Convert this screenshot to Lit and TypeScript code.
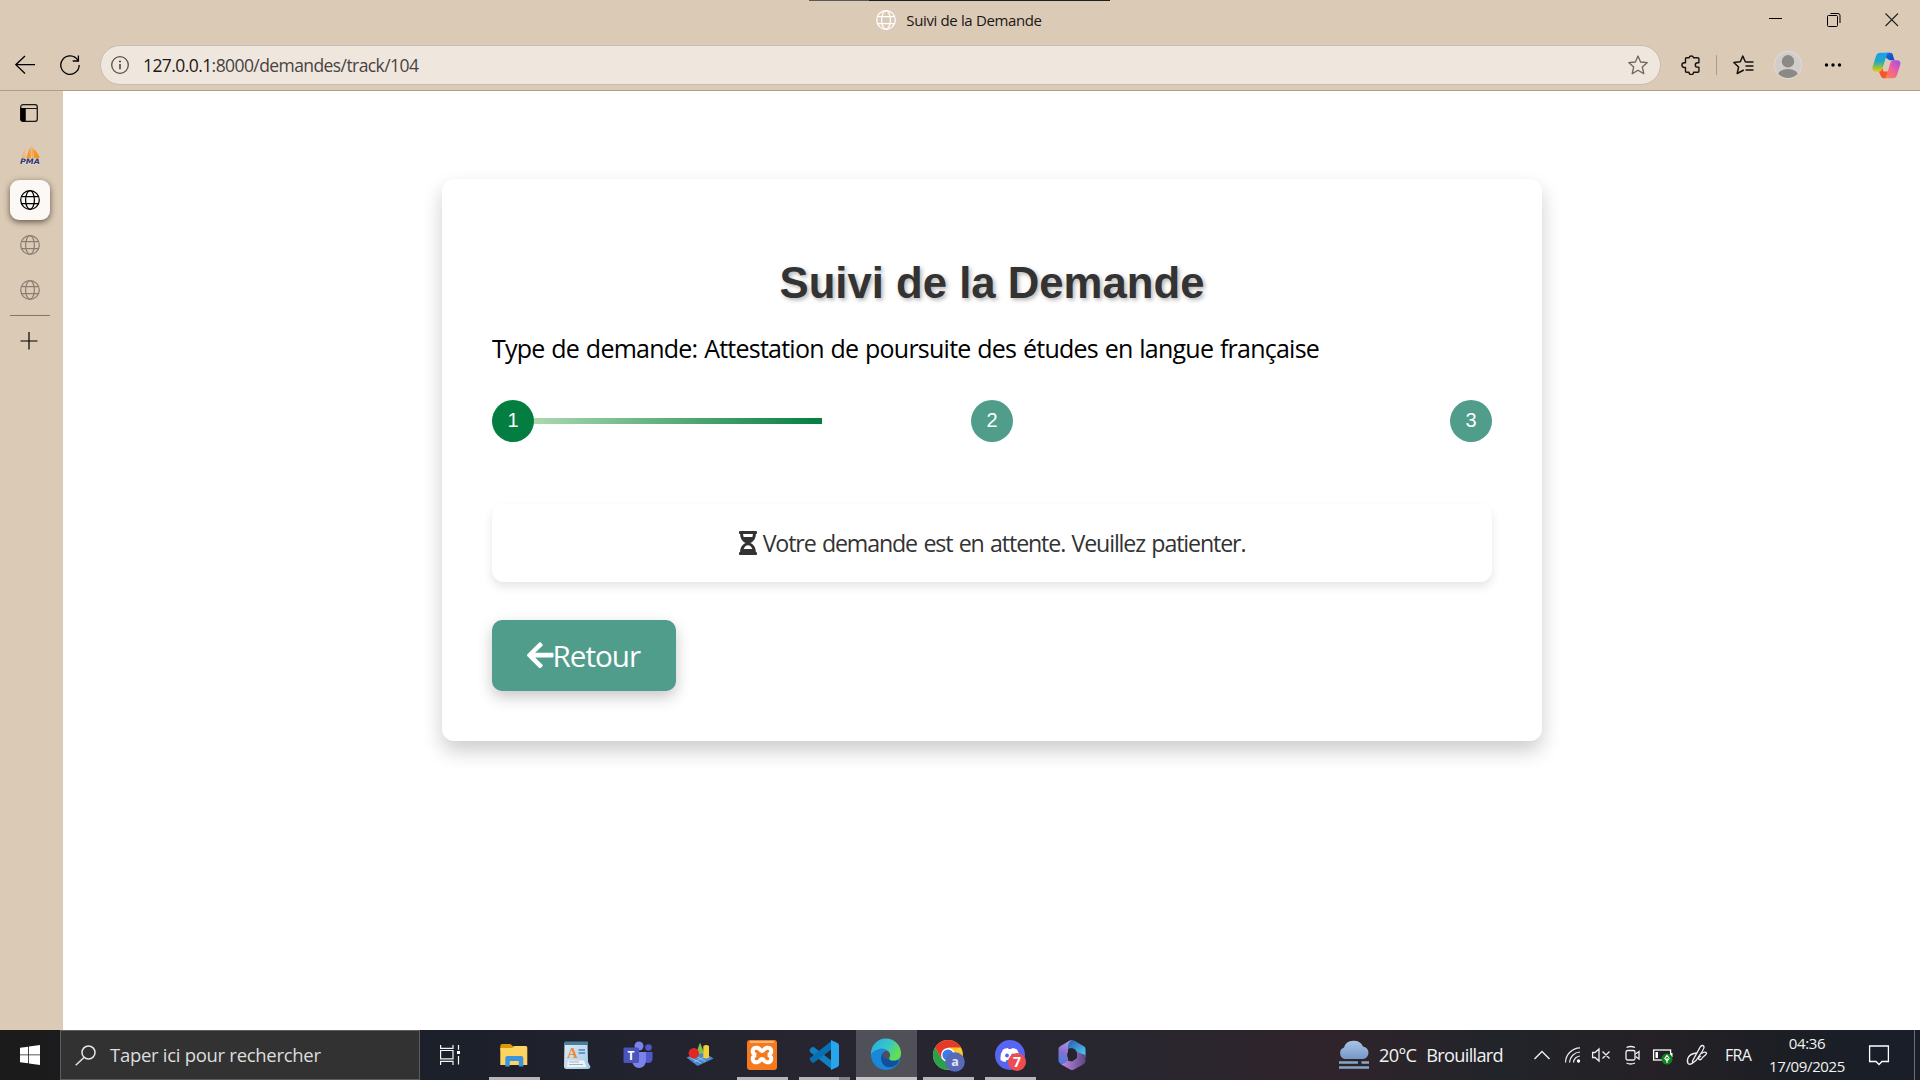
import { LitElement, html, css, svg } from "lit";
import { customElement } from "lit/decorators.js";

const globe = (size: number) => html`<svg class="ico" width=${size} height=${size} viewBox="0 0 20 20" fill="none" stroke="currentColor" stroke-width="1.25">
  <circle cx="10" cy="10" r="9.3"></circle><ellipse cx="10" cy="10" rx="4.4" ry="9.3"></ellipse><path d="M1.5 6.5H18.5M1.5 13.5H18.5"></path></svg>`;

@customElement("title-bar")
class TitleBar extends LitElement {
  static styles = css`
    :host { display: block; height: 40px; position: relative; }
    .bar { display: grid; grid-template-columns: 1fr auto 1fr; height: 40px; align-items: center; }
    .title { display: flex; align-items: center; gap: 10px; color: #fff; padding-right: 2px; }
    .text { color: #1a1714; font-size: 15px; line-height: 20px; letter-spacing: -0.36px; white-space: nowrap; }
    .ico { display: block; }
    .buttons { display: flex; justify-content: flex-end; gap: 44px; padding-right: 21px; }
    .strip { position: absolute; left: 809px; top: 0; width: 301px; height: 1px; background: linear-gradient(90deg, #5b5958 60px, #1e1e22 60px); }
  `;
  render() {
    return html`<div class="bar">
      <span></span>
      <div class="title">${globe(20)}<span class="text">Suivi de la Demande</span></div>
      <div class="buttons">
        <svg width="14" height="14" stroke="#000" fill="none"><path d="M0 5.5H13"></path></svg>
        <svg width="14" height="14" stroke="#000" fill="none"><path d="M.5 3.5a1 1 0 0 1 1-1H9.5a1 1 0 0 1 1 1V12.5a1 1 0 0 1-1 1H1.5a1 1 0 0 1-1-1ZM3.5 .5H11a2 2 0 0 1 2 2V10"></path></svg>
        <svg width="14" height="14" stroke="#222" fill="none" stroke-width="1.1"><path d="M.5 .5 13 13M13 .5 .5 13"></path></svg>
      </div>
    </div><div class="strip"></div>`;
  }
}

@customElement("tool-bar")
class ToolBar extends LitElement {
  static styles = css`
    :host { display: block; }
    .bar { display: flex; align-items: center; height: 51px; box-sizing: border-box; border-bottom: 1px solid #b09c8b; padding: 0 19px 0 15px; }
    svg { display: block; flex: none; }
    .back { margin-right: 25px; }
    .address { flex: 1; display: flex; align-items: center; height: 40px; box-sizing: border-box; border: 1px solid #c5bdb4; border-radius: 20px; background: #efe7de; margin: 0 20px 0 20px; padding: 0 12px 0 10px; gap: 14px; }
    .url { flex: 1; font-size: 17.5px; line-height: 24px; letter-spacing: -0.58px; color: #47433f; white-space: nowrap; padding-bottom: 1px; }
    .host { color: #1b1815; }
    .divider { width: 1px; height: 20px; background: #a99d8e; margin: 0 16px 0 16px; }
    .avatar { margin: 0 22px 0 20px; }
    .copilot { margin-left: 30px; }
  `;
  render() {
    return html`<div class="bar">
      <svg class="back" width="20" height="20" fill="none" stroke="#000" stroke-width="1.3"><path d="M10 1 .8 9.7 10 18.5M1 9.7H20"></path></svg>
      <svg width="20" height="20" fill="none" stroke="#000" stroke-width="1.3"><path d="M17.8 5.2A9.2 9.2 0 1 0 19.2 10M18.4 .5V6H12.7"></path></svg>
      <div class="address">
        <svg width="18" height="18" fill="none" stroke="#55504b" stroke-width="1.3"><circle cx="9" cy="9" r="8.3"></circle><path d="M9 8V13.2" stroke-width="1.7"></path><circle cx="9" cy="5.5" r="1.1" fill="#55504b" stroke="none"></circle></svg>
        <div class="url"><span class="host">127.0.0.1</span>:8000/demandes/track/104</div>
        <svg width="20" height="20" fill="none" stroke="#6b6661" stroke-width="1.3" stroke-linejoin="round"><path d="M10 1 12.6 7 19.3 7.6 14.3 12 15.8 18.7 10 15.2 4.2 18.7 5.7 12 .7 7.6 7.4 7Z"></path></svg>
      </div>
      <svg width="19" height="20" fill="none" stroke="#15120f" stroke-width="1.4" stroke-linejoin="round"><path d="M8 2.7a2.4 2.4 0 0 1 4.6 0H16.9Q17.9 2.7 17.9 3.7V7.7H16.5a2.2 2.2 0 0 0 0 4.4H17.9V16.3Q17.9 17.3 16.9 17.3H12.6a2.3 2.3 0 0 1-4.6 0H5.500Q4.500 17.300 4.500 16.300V12.500H3.300a2.400 2.400 0 0 1 0-4.800H4.500V3.700Q4.500 2.700 5.500 2.700Z"></path></svg>
      <div class="divider"></div>
      <svg width="21" height="20" fill="none" stroke="#15120f" stroke-width="1.5" stroke-linejoin="round"><path d="M14 7.1 12.3 6.8 9.8 1 7.3 6.8 .8 7.5 5.6 12 4.2 18.5 10.8 15M13.5 7H20.5M12.5 11H20.5M12.5 15H20.5"></path></svg>
      <svg class="avatar" width="28" height="28"><defs><clipPath id="av"><circle cx="14" cy="14" r="13"></circle></clipPath></defs><circle cx="14" cy="14" r="14" fill="#dedbd6"></circle><circle cx="14" cy="14" r="13" fill="#d0cdca"></circle><g clip-path="url(#av)" fill="#8c8885"><circle cx="14" cy="10.3" r="6.2"></circle><ellipse cx="14" cy="25" rx="10.5" ry="7"></ellipse></g></svg>
      <svg width="18" height="6" fill="#000"><circle cx="2.5" cy="3" r="1.7"></circle><circle cx="9" cy="3" r="1.7"></circle><circle cx="15.5" cy="3" r="1.7"></circle></svg>
      <svg class="copilot" width="29" height="27" viewBox="0 0 29 27">
        <defs>
          <linearGradient id="c1" x1="0" y1="0" x2="0" y2="1"><stop offset="0" stop-color="#1b9df0"></stop><stop offset=".45" stop-color="#22a9c0"></stop><stop offset=".75" stop-color="#8cc04a"></stop><stop offset="1" stop-color="#f5c518"></stop></linearGradient>
          <linearGradient id="c2" x1="1" y1="0" x2="0" y2="1"><stop offset="0" stop-color="#a048f0"></stop><stop offset=".5" stop-color="#f0609c"></stop><stop offset="1" stop-color="#ff8a3c"></stop></linearGradient>
          <linearGradient id="c3" x1="0" y1="0" x2="1" y2="1"><stop offset="0" stop-color="#0f75da"></stop><stop offset="1" stop-color="#143ec0"></stop></linearGradient>
        </defs>
        <path d="M14 .8H18.5Q20.2 .8 20.8 2.6L22 7Q22.3 8.2 24 8.2H17.5L13 5Z" fill="url(#c3)"></path>
        <path d="M8.2 .8H17Q15 1.5 14 5L10.5 16.5Q9.5 19.8 7 19.8H4Q-.5 19.8 .7 14.5L4 4Q5.2 .8 8.2 .8Z" fill="url(#c1)"></path>
        <path d="M7 19.8Q9.5 19.5 10.5 16.5L11.5 19.5H17.5L14.5 26.3H12Q9.5 26.3 8.8 24Z" fill="#f4552f"></path>
        <path d="M20.5 26.3H12.5Q14 25.5 15 22L18.5 10.5Q19.3 8.2 21.8 8.2H25Q29.3 8.2 28.1 13L25 23Q24 26.3 20.5 26.3Z" fill="url(#c2)"></path>
      </svg>
    </div>`;
  }
}

@customElement("side-tabs")
class SideTabs extends LitElement {
  static styles = css`
    :host { display: block; width: 63px; flex: none; }
    .tabs { display: flex; flex-direction: column; align-items: flex-start; padding-left: 10px; }
    .tab { display: flex; width: 40px; height: 40px; align-items: center; justify-content: center; margin-bottom: 5px; border-radius: 9px; color: #8b7f72; }
    .menu { margin: 2px 0 2px -1px; }
    .active { background: #fbf8f6; color: #000; box-shadow: 0 2px 6px rgba(60, 45, 30, .75); }
    .rule { width: 40px; height: 1px; background: #81766a; margin: 0 0 5px; }
    .last { margin: 0 0 0 -1px; color: #000; }
    svg { display: block; }
    .word { font: italic bold 7.5px "DejaVu Sans", sans-serif; }
  `;
  render() {
    return html`<div class="tabs">
      <div class="tab menu"><svg width="18" height="18" fill="none" stroke="#1b1713"><rect x=".7" y=".7" width="16.6" height="16.6" rx="2.3" stroke-width="1.3"></rect><path d="M1 4.5H17M5 4.5V17" stroke-width="1.2"></path><path d="M.5 4H5.5V17.5H2.5Q.5 17.5 .5 15.5Z" fill="#000" stroke="none"></path></svg></div>
      <div class="tab"><svg width="21" height="21"><path d="M1.2 13 4.8 3.5V13Z" fill="#efb67c"></path><path d="M6 13.5Q8.5 6 10.5 2L11 13.5Z" fill="#f79a2c"></path><path d="M11.5 .5L13.5 5 13 13.5 11.8 11Z" fill="#f6a850"></path><path d="M13.5 3.5Q18 8 20 12.5L13.8 13.5Z" fill="#f89423"></path><text class="word" x="0" y="18.8" fill="#34386d" stroke="#e5dcd6" stroke-width="1" paint-order="stroke" textLength="20" lengthAdjust="spacingAndGlyphs">PMA</text></svg></div>
      <div class="tab active">${globe(20)}</div>
      <div class="tab">${globe(20)}</div>
      <div class="tab">${globe(20)}</div>
      <div class="rule"></div>
      <div class="tab last"><svg width="18" height="18" stroke="#000" stroke-width="1.2"><path d="M9 0V17.5M.5 9H17.5"></path></svg></div>
    </div>`;
  }
}

@customElement("tracking-page")
class TrackingPage extends LitElement {
  static styles = css`
    :host { display: block; flex: 1; background: #fff; }
    .page { display: flex; justify-content: center; padding-top: 88px; padding-left: 1px; }
    .card { width: 1100px; height: 562px; box-sizing: border-box; padding: 76px 50px 0; border-radius: 12px; background: #fff; box-shadow: 0 10px 20px rgba(0, 0, 0, .2); }
    .heading { margin: 0; text-align: center; font: bold 43.7px/56px "Liberation Sans", Arial, sans-serif; color: #333; text-shadow: 2px 2px 4px rgba(0, 0, 0, .3); }
    .type { margin: 19px 0 0; font-size: 25px; line-height: 36px; letter-spacing: -0.76px; word-spacing: 1px; color: #000; white-space: nowrap; }
    .steps { display: flex; justify-content: space-between; align-items: center; height: 42px; margin-top: 34px; background: linear-gradient(90deg, #c3e6bd, #047e40) 0 18px / 330px 6px no-repeat; }
    .step { width: 42px; height: 42px; border-radius: 50%; background: #509d8b; color: #fff; font: 20px/40px "Liberation Sans", Arial, sans-serif; text-align: center; }
    .current { background: #047e40; }
    .message { display: flex; align-items: center; justify-content: center; gap: 6px; height: 78px; margin-top: 62px; border-radius: 12px; color: #333; box-shadow: 0 5px 10px rgba(0, 0, 0, .1); }
    .status { font-size: 23.2px; line-height: 34px; letter-spacing: -1.13px; word-spacing: 1.5px; white-space: nowrap; }
    .button { display: flex; align-items: center; width: 184px; height: 71px; box-sizing: border-box; margin-top: 38px; padding-left: 35px; border-radius: 10px; background: #509d8b; color: #fff; box-shadow: 0 6px 15px rgba(0, 0, 0, .22); }
    .label { font-size: 29.6px; line-height: 40px; letter-spacing: -1px; margin-left: -1px; }
    svg { display: block; flex: none; }
  `;
  render() {
    return html`<div class="page"><div class="card">
      <h1 class="heading">Suivi de la Demande</h1>
      <p class="type">Type de demande: Attestation de poursuite des études en langue française</p>
      <div class="steps">${[1, 2, 3].map((n) => html`<div class="step ${n === 1 ? "current" : ""}">${n}</div>`)}</div>
      <div class="message">
        <svg width="18" height="24" viewBox="0 0 384 512" fill="#333"><path d="M360 0H24C10.745 0 0 10.745 0 24v16c0 13.255 10.745 24 24 24 0 90.965 51.016 167.734 120.842 192C75.016 280.266 24 357.035 24 448c-13.255 0-24 10.745-24 24v16c0 13.255 10.745 24 24 24h336c13.255 0 24-10.745 24-24v-16c0-13.255-10.745-24-24-24 0-90.965-51.016-167.734-120.842-192C308.984 231.734 360 154.965 360 64c13.255 0 24-10.745 24-24V24c0-13.255-10.745-24-24-24zm-75.078 384H99.080c17.059-46.797 52.096-80 92.920-80 40.821 0 75.862 33.196 92.922 80zm.019-256H99.078C91.988 108.548 88 86.748 88 64h208c0 22.805-3.987 44.587-11.059 64z"></path></svg>
        <span class="status">Votre demande est en attente. Veuillez patienter.</span>
      </div>
      <div class="button">
        <svg width="26.6" height="30.4" viewBox="0 0 448 512" fill="#fff"><path d="M257.500 445.100l-22.200 22.200c-9.400 9.400-24.600 9.400-33.900 0L7 273c-9.400-9.400-9.400-24.600 0-33.900L201.400 44.700c9.400-9.400 24.600-9.400 33.900 0l22.200 22.200c9.500 9.500 9.300 25-.4 34.300L136.600 216H424c13.300 0 24 10.700 24 24v32c0 13.300-10.700 24-24 24H136.600l120.500 114.800c9.800 9.300 10 24.800.4 34.300z"></path></svg>
        <span class="label">Retour</span>
      </div>
    </div></div>`;
  }
}

const apps: { state: string; icon: unknown }[] = [
  { state: "open", icon: svg`<g transform="translate(-.7 0)"><path d="M2 6Q2 4 4 4H12L15 6.5H26Q28 6.5 28 8.5V11H2Z" fill="#d99a08"></path><path d="M2 8H14L16 6H27.5Q29 6 29 7.5V25H2Z" fill="#fdd45f"></path><path d="M7 26V18Q7 16 9 16H23Q25 16 25 18V26.5H20.5V21H11.5V26.5H7Z" fill="#3a95de"></path></g>` },
  { state: "", icon: svg`<defs><linearGradient id="n1" x1="0" y1="0" x2="1" y2="1"><stop offset="0" stop-color="#dcecf6"></stop><stop offset="1" stop-color="#a3cbe6"></stop></linearGradient></defs><path d="M3.5 3H26.5L27 22 29.5 27Q29 29.3 26 29H6Q2.8 29.3 3 26Z" fill="url(#n1)"></path><path d="M3.5 1.5H27V5H3.5Z" fill="#4b7d9c"></path><path d="M7 20.5H23L25.5 27H6Z" fill="#f1f4f6"></path><path d="M17.5 10H24M17.5 13H24" stroke="#4e83c4" stroke-width="1.5"></path><path d="M8 22H18M8 24.5H22" stroke="#9db4c6"></path><text class="serif" x="6" y="18" fill="#ee8b38">A</text>` },
  { state: "", icon: svg`<circle cx="16" cy="6" r="4.5" fill="#7b83eb"></circle><circle cx="25.5" cy="7.5" r="3.3" fill="#5059c9"></circle><path d="M19 12H29.5V19Q29 23 25 23Q22 23 20 21Z" fill="#5059c9"></path><path d="M9 12H23V21Q22 28 16 28Q10 27.5 9 21Z" fill="#7b83eb"></path><rect x=".5" y="7.5" width="15.5" height="15.5" rx="1.5" fill="#4b53bc"></rect><text class="tee" x="4.5" y="19.5" fill="#fff">T</text>` },
  { state: "", icon: svg`<path d="M1.5 17.5 17 11 28.5 18.5 12.5 26Z" fill="#4b87cc"></path><path d="M5 17.5 16 23M10 15.5 20.5 21.5M23 15 9 22" stroke="#93c1ee" fill="none"></path><path d="M11.5 12.5 15 2.5 19 12.5Q16 15 11.5 12.5Z" fill="#82c04c"></path><path d="M18.3 6Q21 4 24 6V17.5Q21 19.5 18.3 17.5Z" fill="#f4cf3c"></path><circle cx="8.8" cy="13.3" r="5.2" fill="#e02724"></circle>` },
  { state: "open", icon: svg`<rect width="30" height="30" rx="3" fill="#f47a20"></rect><path d="M3 2H27" stroke="#ffc998" stroke-width="1.5"></path><path d="M10 7.700C5 7 4 14 9 15C4 16 5 23 10 22.300C14 21.500 12.500 19 15 19S16 21.500 20 22.300C25 23 26 16 21 15C26 14 25 7 20 7.700C16 8.500 17.500 11 15 11S14 8.500 10 7.700Z" fill="none" stroke="#fff" stroke-width="4"></path>` },
  { state: "open stacked", icon: svg`<path d="M1 9 3 7.2Q4 6.5 5 7.2L23 21V29.5L1 12Q0 10.5 1 9Z" fill="#127fc0"></path><path d="M1 20 3 22.5Q4 23 5 22.5L23 9V.5L1 18Q0 19 1 20Z" fill="#0870b2"></path><path d="M22 0 28.5 3Q30 3.8 30 5.2V24.8Q30 26 28.5 27L22 30Z" fill="#27a5ed"></path>` },
  { state: "open active", icon: svg`<defs><linearGradient id="e1" x1="0" y1="0" x2="1" y2=".5"><stop offset="0" stop-color="#28a9e5"></stop><stop offset=".55" stop-color="#36c5cc"></stop><stop offset="1" stop-color="#66df4c"></stop></linearGradient></defs><circle cx="15" cy="15" r="15" fill="#1b87d8"></circle><path d="M10 18C11 12 14 11.5 16 12C13 16 17 23 27 20Q28.5 20 27.5 22C22 31 10 28 10 18Z" fill="#11509e"></path><path d="M18.5 17A3.8 3.8 0 1 0 16 18.5Q19 23 30 19L30 17Q27 21.5 22 21Q17 20.5 18.5 17Z" fill="#505058"></path><path d="M0 14A15 15 0 0 1 30 13C30 19 26 20.5 22 20.5C18.5 20.5 17.8 19 18.8 17C21 12 14 7 8 9Q3 10 0 14Z" fill="url(#e1)"></path>` },
  { state: "open", icon: svg`<circle cx="15" cy="15" r="15" fill="#fbc92e"></circle><path d="M2 7.5A15 15 0 0 1 28 7.5H15L8.5 18.8Z" fill="#e5392c"></path><path d="M2 7.5A15 15 0 0 0 15 30L21.5 18.7H8.5Z" fill="#2aa14c"></path><circle cx="15" cy="15" r="7" fill="#fff"></circle><circle cx="15" cy="15" r="5.6" fill="#3d7ce8"></circle><circle cx="22" cy="22" r="9.8" fill="#5769b7"></circle><text class="badge small" x="22" y="26" text-anchor="middle" fill="#e2e5f8">a</text>` },
  { state: "open", icon: svg`<circle cx="15" cy="15" r="15" fill="#5865f2"></circle><path d="M8 9.5Q10 8 13 8L13.5 9H16.5L17 8Q20 8 22 9.5Q25 14 24.5 20Q22 22 19.5 22L18.5 20H11.5L10.5 22Q8 22 5.5 20Q5 14 8 9.5Z" fill="#fff"></path><circle cx="12" cy="15.5" r="1.9" fill="#5865f2"></circle><circle cx="18" cy="15.5" r="1.9" fill="#5865f2"></circle><circle cx="22" cy="22" r="9" fill="#ed4d50"></circle><text class="badge" x="22" y="27" text-anchor="middle" fill="#fff">7</text>` },
  { state: "", icon: svg`<defs><linearGradient id="m1" x1=".5" y1="0" x2=".3" y2="1"><stop offset="0" stop-color="#a79be0"></stop><stop offset=".5" stop-color="#8a6fd0"></stop><stop offset="1" stop-color="#3f7fe0"></stop></linearGradient><linearGradient id="m2" x1="0" y1="0" x2="1" y2="1"><stop offset="0" stop-color="#2a56a8"></stop><stop offset="1" stop-color="#4fd2f8"></stop></linearGradient><linearGradient id="m3" x1="0" y1="0" x2="1" y2="0"><stop offset="0" stop-color="#c58be6"></stop><stop offset="1" stop-color="#5c4784"></stop></linearGradient></defs><path d="M13 .6Q15 -.5 17 .6L26.5 6Q28.5 7 28.5 9V17L20 13Q19 8 13 8L10 10Q8 2.5 13 .6Z" fill="url(#m2)"></path><path d="M15 0Q11 2 11 7V20Q10 24 6 25L3.5 23.8Q1.5 22.5 1.5 20.5V9Q1.5 7 3.5 6L13 .6Z" fill="url(#m1)"></path><path d="M28.5 15V21Q28.5 23 26.5 24.2L17 29.5Q15 30.5 13 29.5L3.5 24Q7 25 10.5 20.5L15 21.5 20 18V12Z" fill="url(#m3)"></path><circle cx="15" cy="15" r="4.9" fill="#25242e"></circle>` },
];

@customElement("task-bar")
class TaskBar extends LitElement {
  static styles = css`
    :host { display: block; height: 50px; }
    .bar { display: flex; height: 50px; color: #f2f2f2; background: linear-gradient(90deg, #1b1b1b 0, #1c202b 450px, #262530 800px, #28262f 1120px, #30242b 1330px, #212429 1500px, #252126 1650px, #1b1e24 1800px, #191e29 1900px); }
    .start { width: 60px; display: flex; align-items: center; justify-content: center; }
    .search { display: flex; align-items: center; width: 360px; box-sizing: border-box; border: 1px solid #5d5d5d; background: #323232; padding-left: 14px; gap: 14px; }
    .hint { font-size: 18.5px; line-height: 26px; letter-spacing: -0.29px; color: #dedede; white-space: nowrap; }
    .view { width: 63px; display: flex; align-items: center; justify-content: center; box-sizing: border-box; padding-right: 4px; }
    .app { width: 62px; height: 50px; box-sizing: border-box; padding-top: 10px; padding-right: 1px; display: flex; justify-content: center; align-items: flex-start; }
    .app.open { background: linear-gradient(#b8b4b8, #b8b4b8) 6px 47px / 51px 3px no-repeat; }
    .app.stacked { background: linear-gradient(90deg, #b8b4b8 40px, #858287 40px) 6px 47px / 51px 3px no-repeat; }
    .app.active { background: linear-gradient(#c5c1c5, #c5c1c5) 1px 47px / 61px 3px no-repeat, linear-gradient(#505058, #505058) 1px 0 / 61px 50px no-repeat; }
    .serif { font: bold 15px "Liberation Serif", serif; }
    .tee { font: bold 12px "Open Sans", sans-serif; }
    .badge { font: bold 14px "Open Sans", sans-serif; }
    .small { font-size: 12.5px; }
    .tray { margin-left: auto; display: flex; align-items: center; padding-right: 5px; }
    .weather { width: 123px; margin: 0 32px 0 10px; font-size: 18.2px; letter-spacing: -0.7px; word-spacing: 1px; white-space: pre; }
    .lang { width: 26px; margin: 0 17px 0 18px; font-size: 16px; letter-spacing: -0.7px; }
    .clock { width: 80px; text-align: center; font-size: 15px; line-height: 23px; letter-spacing: -0.35px; white-space: nowrap; margin: 0 22px 0 -1px; }
    .edge { width: 1px; height: 50px; background: #6c6f76; margin-left: 25px; }
    svg { display: block; flex: none; overflow: visible; }
    .g1 { margin-right: 15px; } .g2 { margin-right: 12px; } .g3 { margin-right: 15px; } .g4 { margin-right: 13px; } .g5 { margin-right: 14px; }
  `;
  render() {
    return html`<div class="bar">
      <div class="start"><svg width="20" height="20" fill="#fff"><path d="M0 2.8 8.2 1.7V9.5H0ZM9 1.6 20 0V9.5H9ZM0 10.3H8.2V18.3L0 17.2ZM9 10.3H20V20L9 18.4Z"></path></svg></div>
      <div class="search"><svg width="21" height="21" fill="none" stroke="#e6e6e6" stroke-width="1.5"><circle cx="13.5" cy="7.5" r="6.5"></circle><path d="M9 12.5 .7 20.3"></path></svg><span class="hint">Taper ici pour rechercher</span></div>
      <div class="view"><svg width="20" height="20" fill="none" stroke="#f4f4f4" stroke-width="1.2"><path d="M.6 0V3.4H13V0M.6 20V16.4H13V20M.6 5.5H13V13.9H.6ZM18.5 0V4.8M18.5 11V19.5"></path><rect x="17" y="6" width="3" height="3" fill="#fff" stroke="none"></rect></svg></div>
      ${apps.map((a) => html`<div class="app ${a.state}"><svg width="30" height="30" viewBox="0 0 30 30">${a.icon}</svg></div>`)}
      <div class="tray">
        <svg width="30" height="30"><defs><linearGradient id="w" x1="0" y1="0" x2="0" y2="1"><stop offset="0" stop-color="#a9c3e4"></stop><stop offset="1" stop-color="#7597c8"></stop></linearGradient></defs><path d="M6 19A6 6 0 0 1 5 7.5A10 9 0 0 1 24 6.5A6.3 6.3 0 0 1 24 19Z" fill="url(#w)"></path><path d="M0 22.5H19M22.5 22.5H30M0 27.5H30" stroke="#87a5c8" stroke-width="2.3"></path></svg>
        <span class="weather">20°C  Brouillard</span>
        <svg class="g1" width="16" height="10" fill="none" stroke="#eee" stroke-width="1.4"><path d="M.5 9 8 1.5 15.5 9"></path></svg>
        <svg class="g2" width="15" height="16" fill="none" stroke="#eee" stroke-width="1.2"><path d="M.5 15.5A15 15 0 0 1 15 .8M4.5 15.5A11 11 0 0 1 15 5M8.5 15.5A7 7 0 0 1 15 9"></path><circle cx="13.5" cy="14" r="1.7" fill="#fff" stroke="none"></circle></svg>
        <svg class="g3" width="18" height="14" fill="none" stroke="#eee" stroke-width="1.3"><path d="M.6 4.5H3L7 1V13L3 9.5H.6ZM10.5 3.5 17.5 10.5M17.5 3.5 10.5 10.5"></path></svg>
        <svg class="g4" width="15" height="18" fill="none" stroke="#eee" stroke-width="1.3"><rect x="1" y="4.5" width="9" height="9.5" rx="1.5"></rect><path d="M10.5 8 14 5.5V13L10.5 10.5M1.5 1.5Q5.5-.5 10 1.5M1.5 17Q5.5 19 10 17"></path></svg>
        <svg class="g5" width="20" height="16"><rect x=".6" y="3" width="17" height="10" fill="none" stroke="#fff" stroke-width="1.3"></rect><path d="M2.5 5H5V11H2.5ZM18 6H19.5V10H18Z" fill="#fff"></path><circle cx="14" cy="12" r="5.5" fill="#0d8620"></circle><path d="M14 16V11M14 14 11.8 11.5 14 8.5 16.2 11.5Z" fill="none" stroke="#fff" stroke-width="1.1"></path></svg>
        <svg width="20" height="20" fill="none" stroke="#eee" stroke-width="1.3"><path d="M5.5 16 13.5 1.5Q15.5-.5 17 1.5Q17.5 3 15.5 6L9 15.5 5.5 18ZM9.5 8Q4 8.5 1.5 12Q-.5 15.5 1 18.5Q3.5 20.5 7 17M14 11Q10.5 13 12 14.5Q14 15.5 16 12Q20 9 19.5 8Q18 6 14.5 8.5"></path></svg>
        <span class="lang">FRA</span>
        <div class="clock"><div>04:36</div><div>17/09/2025</div></div>
        <svg width="20" height="20" fill="none" stroke="#fff" stroke-width="1.3"><path d="M.6 1H19.4V16.5H13L10 19.5 7 16.5H.6Z"></path></svg>
        <div class="edge"></div>
      </div>
    </div>`;
  }
}

@customElement("app-root")
class AppRoot extends LitElement {
  static styles = css`
    :host { display: block; }
    .screen { width: 1920px; height: 1080px; overflow: hidden; display: flex; flex-direction: column; background: #dbcab6; font-family: "Open Sans", "Noto Sans", sans-serif; }
    .body { flex: 1; display: flex; min-height: 0; overflow: hidden; }
    .chrome { height: 91px; display: flex; flex-direction: column; }
  `;
  render() {
    return html`<div class="screen">
      <div class="chrome"><title-bar></title-bar><tool-bar></tool-bar></div>
      <div class="body"><side-tabs></side-tabs><tracking-page></tracking-page></div>
      <task-bar></task-bar>
    </div>`;
  }
}
